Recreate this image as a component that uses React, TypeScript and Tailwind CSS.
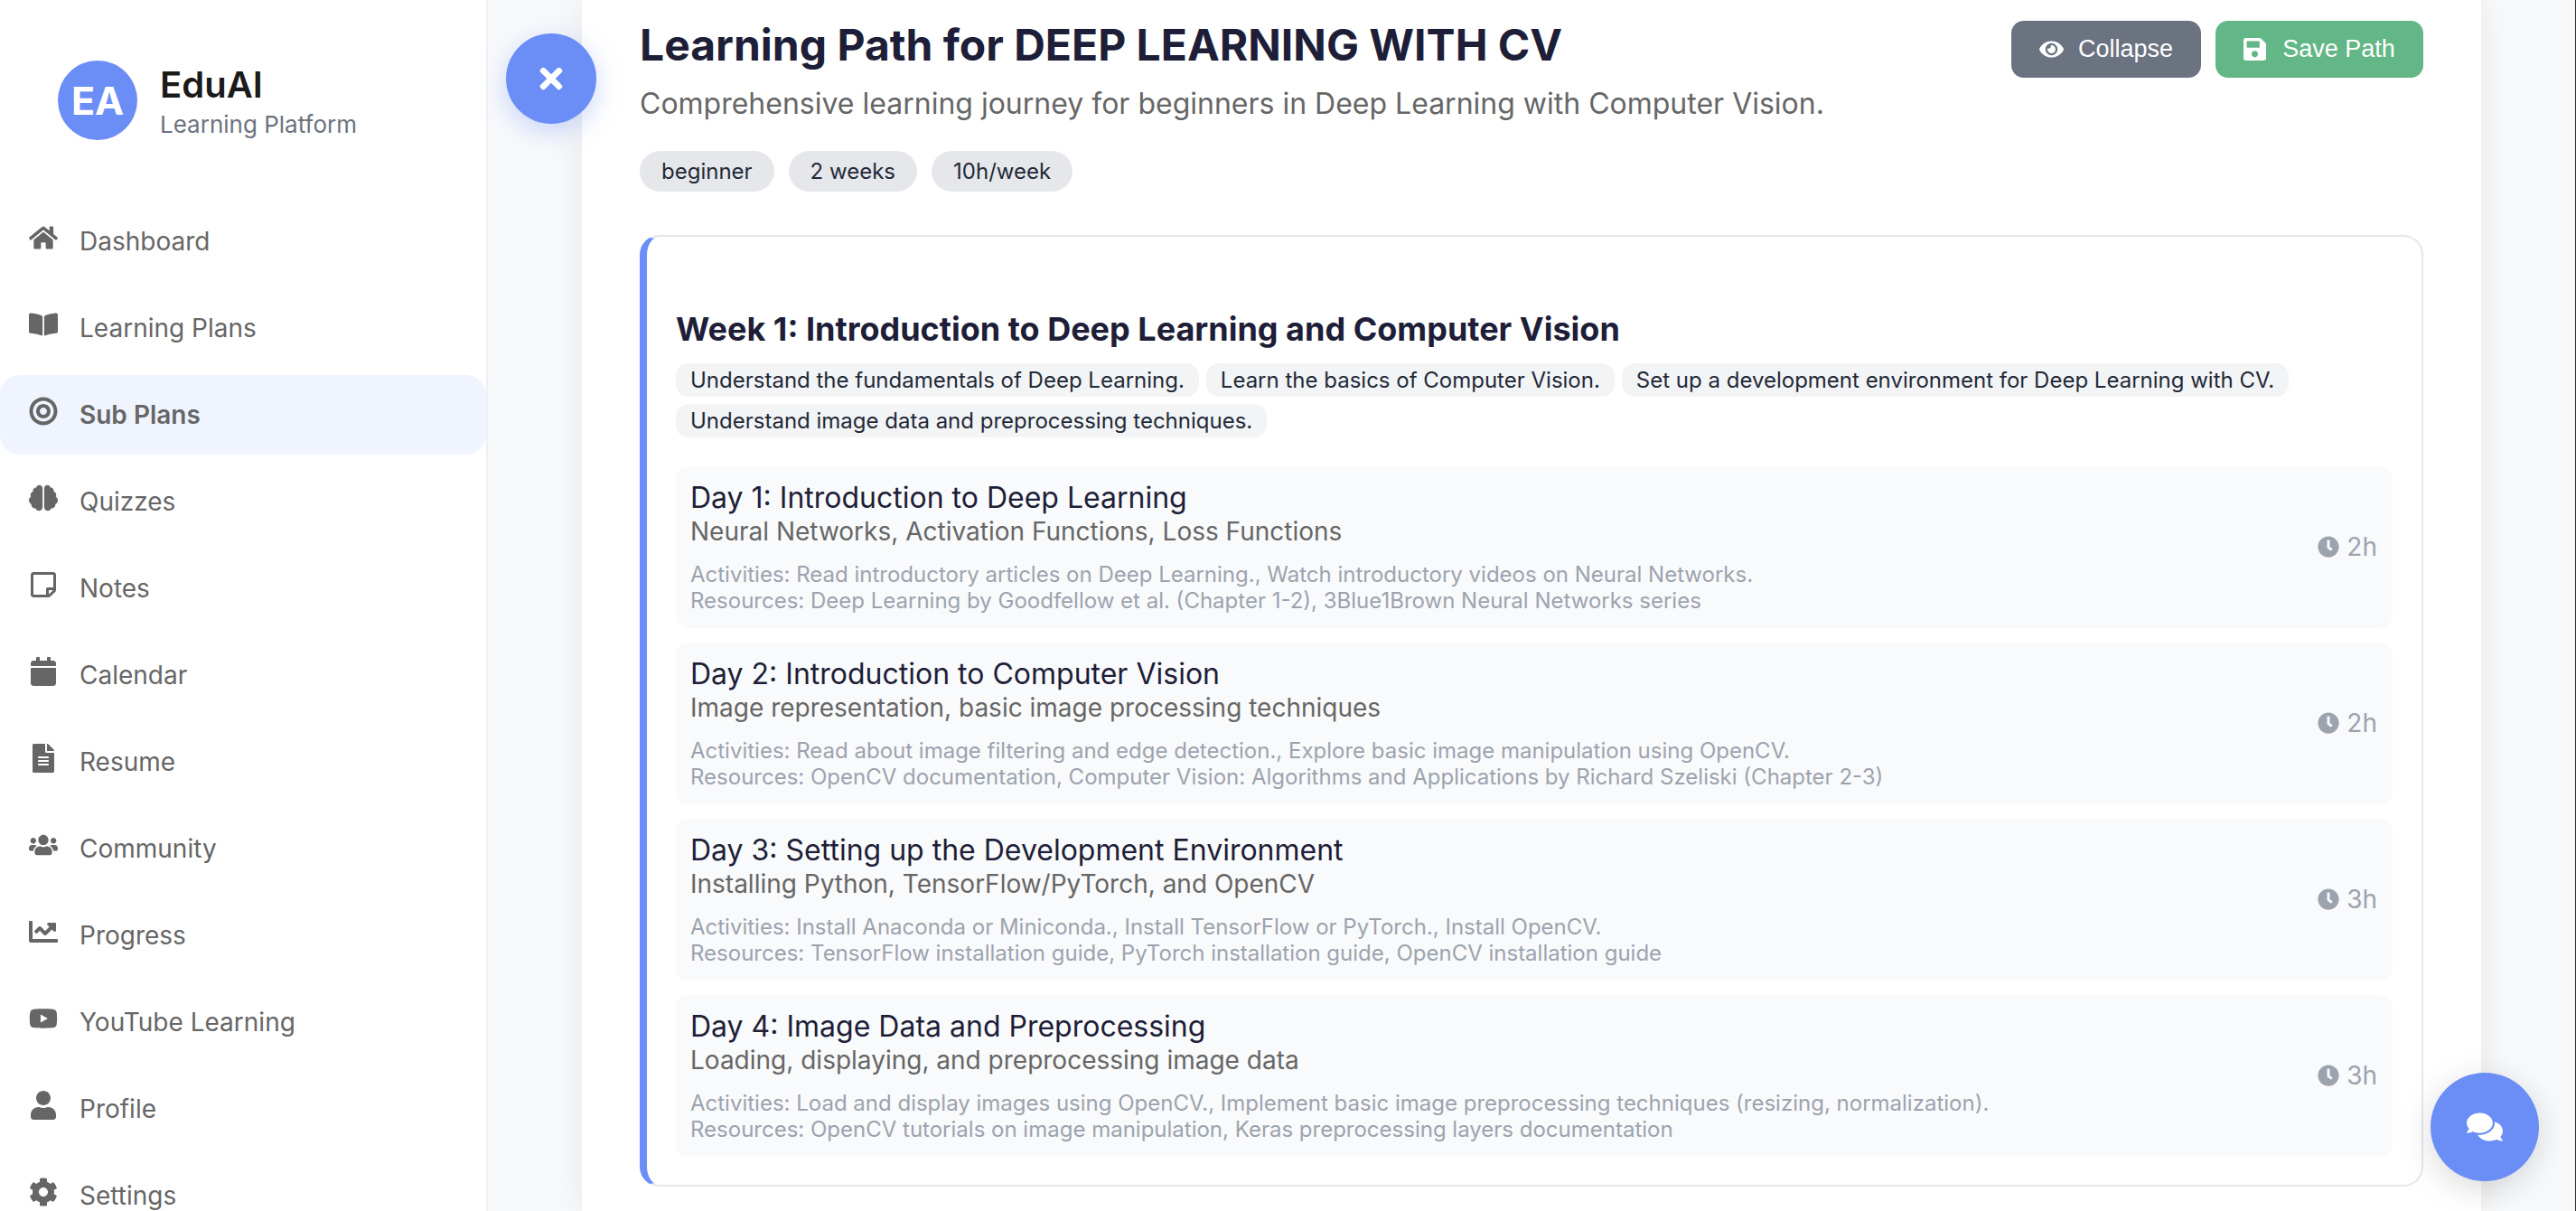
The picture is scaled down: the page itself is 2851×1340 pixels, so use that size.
import { FaBookOpen, FaBrain, FaBullseye, FaCalendar, FaChartLine, FaClock, FaCog, FaComments, FaEye, FaFileAlt, FaHome, FaRegStickyNote, FaSave, FaTimes, FaUser, FaUsers, FaYoutube } from 'react-icons/fa';

const navItems = [
  { label: 'Dashboard', icon: FaHome },
  { label: 'Learning Plans', icon: FaBookOpen },
  { label: 'Sub Plans', icon: FaBullseye, active: true },
  { label: 'Quizzes', icon: FaBrain },
  { label: 'Notes', icon: FaRegStickyNote },
  { label: 'Calendar', icon: FaCalendar },
  { label: 'Resume', icon: FaFileAlt },
  { label: 'Community', icon: FaUsers },
  { label: 'Progress', icon: FaChartLine },
  { label: 'YouTube Learning', icon: FaYoutube },
  { label: 'Profile', icon: FaUser },
  { label: 'Settings', icon: FaCog },
];

const goals = [
  'Understand the fundamentals of Deep Learning.',
  'Learn the basics of Computer Vision.',
  'Set up a development environment for Deep Learning with CV.',
  'Understand image data and preprocessing techniques.',
];

const days = [
  {
    title: 'Day 1: Introduction to Deep Learning',
    topics: 'Neural Networks, Activation Functions, Loss Functions',
    activities: 'Activities: Read introductory articles on Deep Learning., Watch introductory videos on Neural Networks.',
    resources: 'Resources: Deep Learning by Goodfellow et al. (Chapter 1-2), 3Blue1Brown Neural Networks series',
    hours: '2h',
  },
  {
    title: 'Day 2: Introduction to Computer Vision',
    topics: 'Image representation, basic image processing techniques',
    activities: 'Activities: Read about image filtering and edge detection., Explore basic image manipulation using OpenCV.',
    resources: 'Resources: OpenCV documentation, Computer Vision: Algorithms and Applications by Richard Szeliski (Chapter 2-3)',
    hours: '2h',
  },
  {
    title: 'Day 3: Setting up the Development Environment',
    topics: 'Installing Python, TensorFlow/PyTorch, and OpenCV',
    activities: 'Activities: Install Anaconda or Miniconda., Install TensorFlow or PyTorch., Install OpenCV.',
    resources: 'Resources: TensorFlow installation guide, PyTorch installation guide, OpenCV installation guide',
    hours: '3h',
  },
  {
    title: 'Day 4: Image Data and Preprocessing',
    topics: 'Loading, displaying, and preprocessing image data',
    activities: 'Activities: Load and display images using OpenCV., Implement basic image preprocessing techniques (resizing, normalization).',
    resources: 'Resources: OpenCV tutorials on image manipulation, Keras preprocessing layers documentation',
    hours: '3h',
  },
];

function Sidebar() {
  return (
    <aside className="w-[540px] h-full shrink-0 bg-white border-r-2 border-[#eef0f4] overflow-hidden">
      <div className="flex items-center gap-[25px] pl-16 pt-[67px] mb-[68px]">
        <div className="w-[88px] h-[88px] rounded-full bg-[#6b8ef6] text-white flex items-center justify-center text-[43px] font-bold">EA</div>
        <div className="pt-[4px]">
          <div className="text-[40px] leading-[46px] font-semibold text-[#1a1a1a]">EduAI</div>
          <div className="mt-[3px] text-[26px] leading-[35px] text-[#6b7280]">Learning Platform</div>
        </div>
      </div>
      <nav className="flex flex-col gap-2">
        {navItems.map(({ label, icon: Icon, active }) => (
          <div
            key={label}
            className={`h-[88px] shrink-0 flex items-center pl-8 text-[#666666] rounded-[22px] ${active ? 'bg-[#f0f4fe] font-semibold' : ''}`}
          >
            <Icon className="w-[32px] h-[32px] mb-[8px] shrink-0" />
            <span className="ml-[24px] text-[28px]">{label}</span>
          </div>
        ))}
      </nav>
    </aside>
  );
}

function DayRow({ day }: { day: (typeof days)[number] }) {
  return (
    <div className="h-[179px] shrink-0 flex items-center justify-between rounded-[14px] bg-[#f9fafb] pl-[16px] pr-[17px]">
      <div>
        <div className="text-[32px] leading-[38px] text-[#1e1e38]">{day.title}</div>
        <div className="text-[28px] leading-[36px] text-[#666666]">{day.topics}</div>
        <div className="mt-[15px] text-[24px] leading-[29px] text-[#9ca3af]">
          <div>{day.activities}</div>
          <div>{day.resources}</div>
        </div>
      </div>
      <div className="flex items-center gap-[8px] mb-[2px] text-[28px] text-[#9ca3af]">
        <FaClock className="w-[24px] h-[24px]" />
        <span>{day.hours}</span>
      </div>
    </div>
  );
}

export default function App() {
  return (
    <div className="relative flex h-screen overflow-hidden border-r border-[#2b2b2b] bg-[#f8f9fb] font-['Inter',sans-serif]">
      <Sidebar />

      <main className="flex-1 min-w-0 pl-[104px] pr-[104px]">
        <div className="h-full bg-white px-[64px] pt-[23px] shadow-[0_0_36px_rgba(0,0,0,0.08)]">
          <div className="flex items-start justify-between">
            <div>
              <h1 className="text-[48px] leading-[54px] font-bold text-[#1e1e38]">Learning Path for DEEP LEARNING WITH CV</h1>
              <p className="mt-[16px] text-[32px] leading-[44px] text-[#666666]">Comprehensive learning journey for beginners in Deep Learning with Computer Vision.</p>
            </div>
            <div className="flex gap-4 font-['Liberation_Sans',Arial,sans-serif] text-[27px] text-white">
              <button className="w-[210px] h-[63px] rounded-[14px] bg-[#6b7280] flex items-center justify-center gap-[16px]">
                <FaEye className="w-[27px] h-[27px]" />
                <span>Collapse</span>
              </button>
              <button className="w-[230px] h-[63px] rounded-[14px] bg-[#63b685] flex items-center justify-center gap-[18px]">
                <FaSave className="w-[25px] h-[29px]" />
                <span>Save Path</span>
              </button>
            </div>
          </div>

          <div className="mt-[30px] flex gap-4">
            {['beginner', '2 weeks', '10h/week'].map((tag) => (
              <span key={tag} className="h-[45px] rounded-full bg-[#e5e7eb] px-[24px] flex items-center text-[24px] text-[#1f2937]">{tag}</span>
            ))}
          </div>

          <section className="mt-[48px] h-[1053px] rounded-[22px] border-2 border-l-[8px] border-[#e5e7eb] border-l-[#6b8ef6] pl-[32px] pr-[32px] pt-[80px]">
            <h2 className="text-[36px] leading-[44px] font-bold text-[#1e1e38]">Week 1: Introduction to Deep Learning and Computer Vision</h2>
            <div className="mt-[16px] flex flex-wrap gap-2">
              {goals.map((goal) => (
                <span key={goal} className="h-[37px] rounded-[14px] bg-[#f3f4f6] px-4 flex items-center text-[24px] text-[#1f2937]">{goal}</span>
              ))}
            </div>
            <div className="mt-[32px] flex flex-col gap-4">
              {days.map((day) => (
                <DayRow key={day.title} day={day} />
              ))}
            </div>
          </section>
        </div>
      </main>

      <button className="absolute left-[560px] top-[37px] w-[100px] h-[100px] rounded-full bg-[#6b8ef6] text-white flex items-center justify-center shadow-[0_8px_28px_rgba(107,142,246,0.35)]">
        <FaTimes className="w-[36px] h-[36px]" />
      </button>
      <button className="absolute left-[2690px] top-[1187px] w-[120px] h-[120px] rounded-full bg-[#6b8ef6] text-white flex items-center justify-center shadow-[0_8px_36px_rgba(0,0,0,0.15)]">
        <FaComments className="w-[40px] h-[40px]" />
      </button>
    </div>
  );
}
